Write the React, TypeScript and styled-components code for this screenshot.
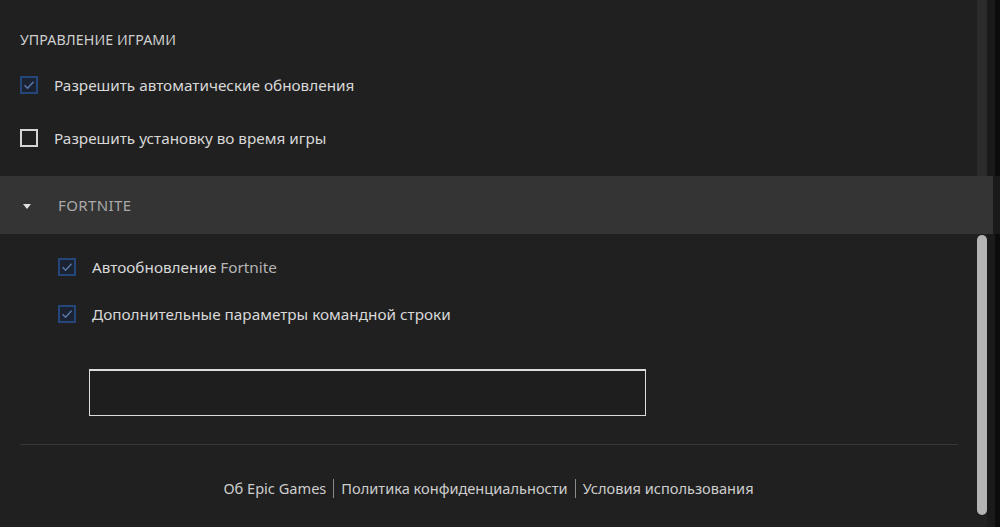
import React from 'react';
import styled, { createGlobalStyle } from 'styled-components';

const GlobalStyle = createGlobalStyle`
  body {
    margin: 0;
    background: #0d0d0d;
    font-family: "Noto Sans", "Open Sans", sans-serif;
  }
`;

const Page = styled.div`
  width: 1000px;
  height: 527px;
  display: flex;
  flex-direction: column;
  overflow: hidden;
`;

const Section = styled.div<{ $height: number }>`
  display: flex;
  height: ${(p) => p.$height}px;
`;

const Content = styled.div<{ $pad: number }>`
  flex: 1;
  background: #202020;
  padding: 0 19px 0 ${(p) => p.$pad}px;
  display: flex;
  flex-direction: column;
`;

const Track = styled.div<{ $light?: boolean }>`
  width: 10px;
  background: ${(p) => (p.$light ? '#2b2b2b' : '#202020')};
  display: flex;
  flex-direction: column;
`;

const Thumb = styled.div`
  height: 280px;
  margin-top: 1px;
  border-radius: 5px;
  background: #b4b4b4;
`;

const Edge = styled.div<{ $width: number }>`
  width: ${(p) => p.$width}px;
  background: linear-gradient(to right, #1a1a1a 0, #1a1a1a 8px, #0b0b0b 8px);
`;

const Heading = styled.div`
  margin-top: 30px;
  height: 20px;
  line-height: 20px;
  font-size: 14.2px;
  color: #cfcfcf;
  letter-spacing: 0.1px;
`;

const Row = styled.label<{ $gap: number }>`
  display: flex;
  align-items: center;
  height: 26px;
  margin-top: ${(p) => p.$gap}px;
  gap: 16px;
  font-size: 15.3px;
  color: #d8d8d8;
  cursor: pointer;
`;

const Box = styled.span<{ $checked?: boolean }>`
  width: 18px;
  height: 18px;
  box-sizing: border-box;
  flex: none;
  display: flex;
  align-items: center;
  justify-content: center;
  border: 2px solid ${(p) => (p.$checked ? '#244678' : '#d4d4d4')};
  background: ${(p) => (p.$checked ? '#1b2232' : 'transparent')};
`;

const Light = styled.span`
  color: #b4b4b4;
`;

const Band = styled.div`
  height: 58px;
  display: flex;
`;

const BandInner = styled.div`
  flex: 1;
  background: #343434;
  display: flex;
  align-items: center;
  padding-left: 23px;
`;

const Caret = styled.span`
  width: 0;
  height: 0;
  border-left: 4px solid transparent;
  border-right: 4px solid transparent;
  border-top: 5px solid #e2e2e2;
  margin-right: 27px;
  margin-top: 2px;
`;

const BandTitle = styled.span`
  font-size: 15px;
  color: #a9a9a9;
  letter-spacing: 0.4px;
`;

const ArgsInput = styled.input`
  margin: 42px 0 0 31px;
  width: 557px;
  height: 47px;
  box-sizing: border-box;
  background: #1e1e1e;
  border: 1px solid #dcdcdc;
  border-top-width: 2px;
  outline: none;
  color: #ddd;
  font: inherit;
`;

const Divider = styled.hr`
  margin: 28px 0 0 -38px;
  border: none;
  border-top: 1px solid #383838;
`;

const Footer = styled.nav`
  margin: 33px -19px 0 -58px;
  display: flex;
  justify-content: center;
  align-items: center;
  height: 20px;
  font-size: 14.6px;
  color: #cdcdcd;
`;

const Sep = styled.span`
  width: 1px;
  height: 19px;
  background: #8a8a8a;
  margin: 0 7px;
`;

function Check({ checked }: { checked?: boolean }) {
  return (
    <Box $checked={checked}>
      {checked && (
        <svg width="12" height="10" viewBox="0 0 12 10">
          <path d="M1.5 5.2 L4.6 8.2 L10.5 1.8" fill="none" stroke="#5b7cae" strokeWidth="1.3" />
        </svg>
      )}
    </Box>
  );
}

export default function App() {
  return (
    <>
      <GlobalStyle />
      <Page>
        <Section $height={176}>
          <Content $pad={20}>
            <Heading>УПРАВЛЕНИЕ ИГРАМИ</Heading>
            <Row $gap={22}>
              <Check checked />
              Разрешить автоматические обновления
            </Row>
            <Row $gap={27}>
              <Check />
              Разрешить установку во время игры
            </Row>
          </Content>
          <Track $light />
          <Edge $width={13} />
        </Section>
        <Band>
          <BandInner>
            <Caret />
            <BandTitle>FORTNITE</BandTitle>
          </BandInner>
          <Edge $width={7} />
        </Band>
        <Section $height={293}>
          <Content $pad={58}>
            <Row $gap={20}>
              <Check checked />
              <span>
                Автообновление <Light>Fortnite</Light>
              </span>
            </Row>
            <Row $gap={21}>
              <Check checked />
              Дополнительные параметры командной строки
            </Row>
            <ArgsInput type="text" />
            <Divider />
            <Footer>
              <span>Об Epic Games</span>
              <Sep />
              <span>Политика конфиденциальности</span>
              <Sep />
              <span>Условия использования</span>
            </Footer>
          </Content>
          <Track>
            <Thumb />
          </Track>
          <Edge $width={13} />
        </Section>
      </Page>
    </>
  );
}
